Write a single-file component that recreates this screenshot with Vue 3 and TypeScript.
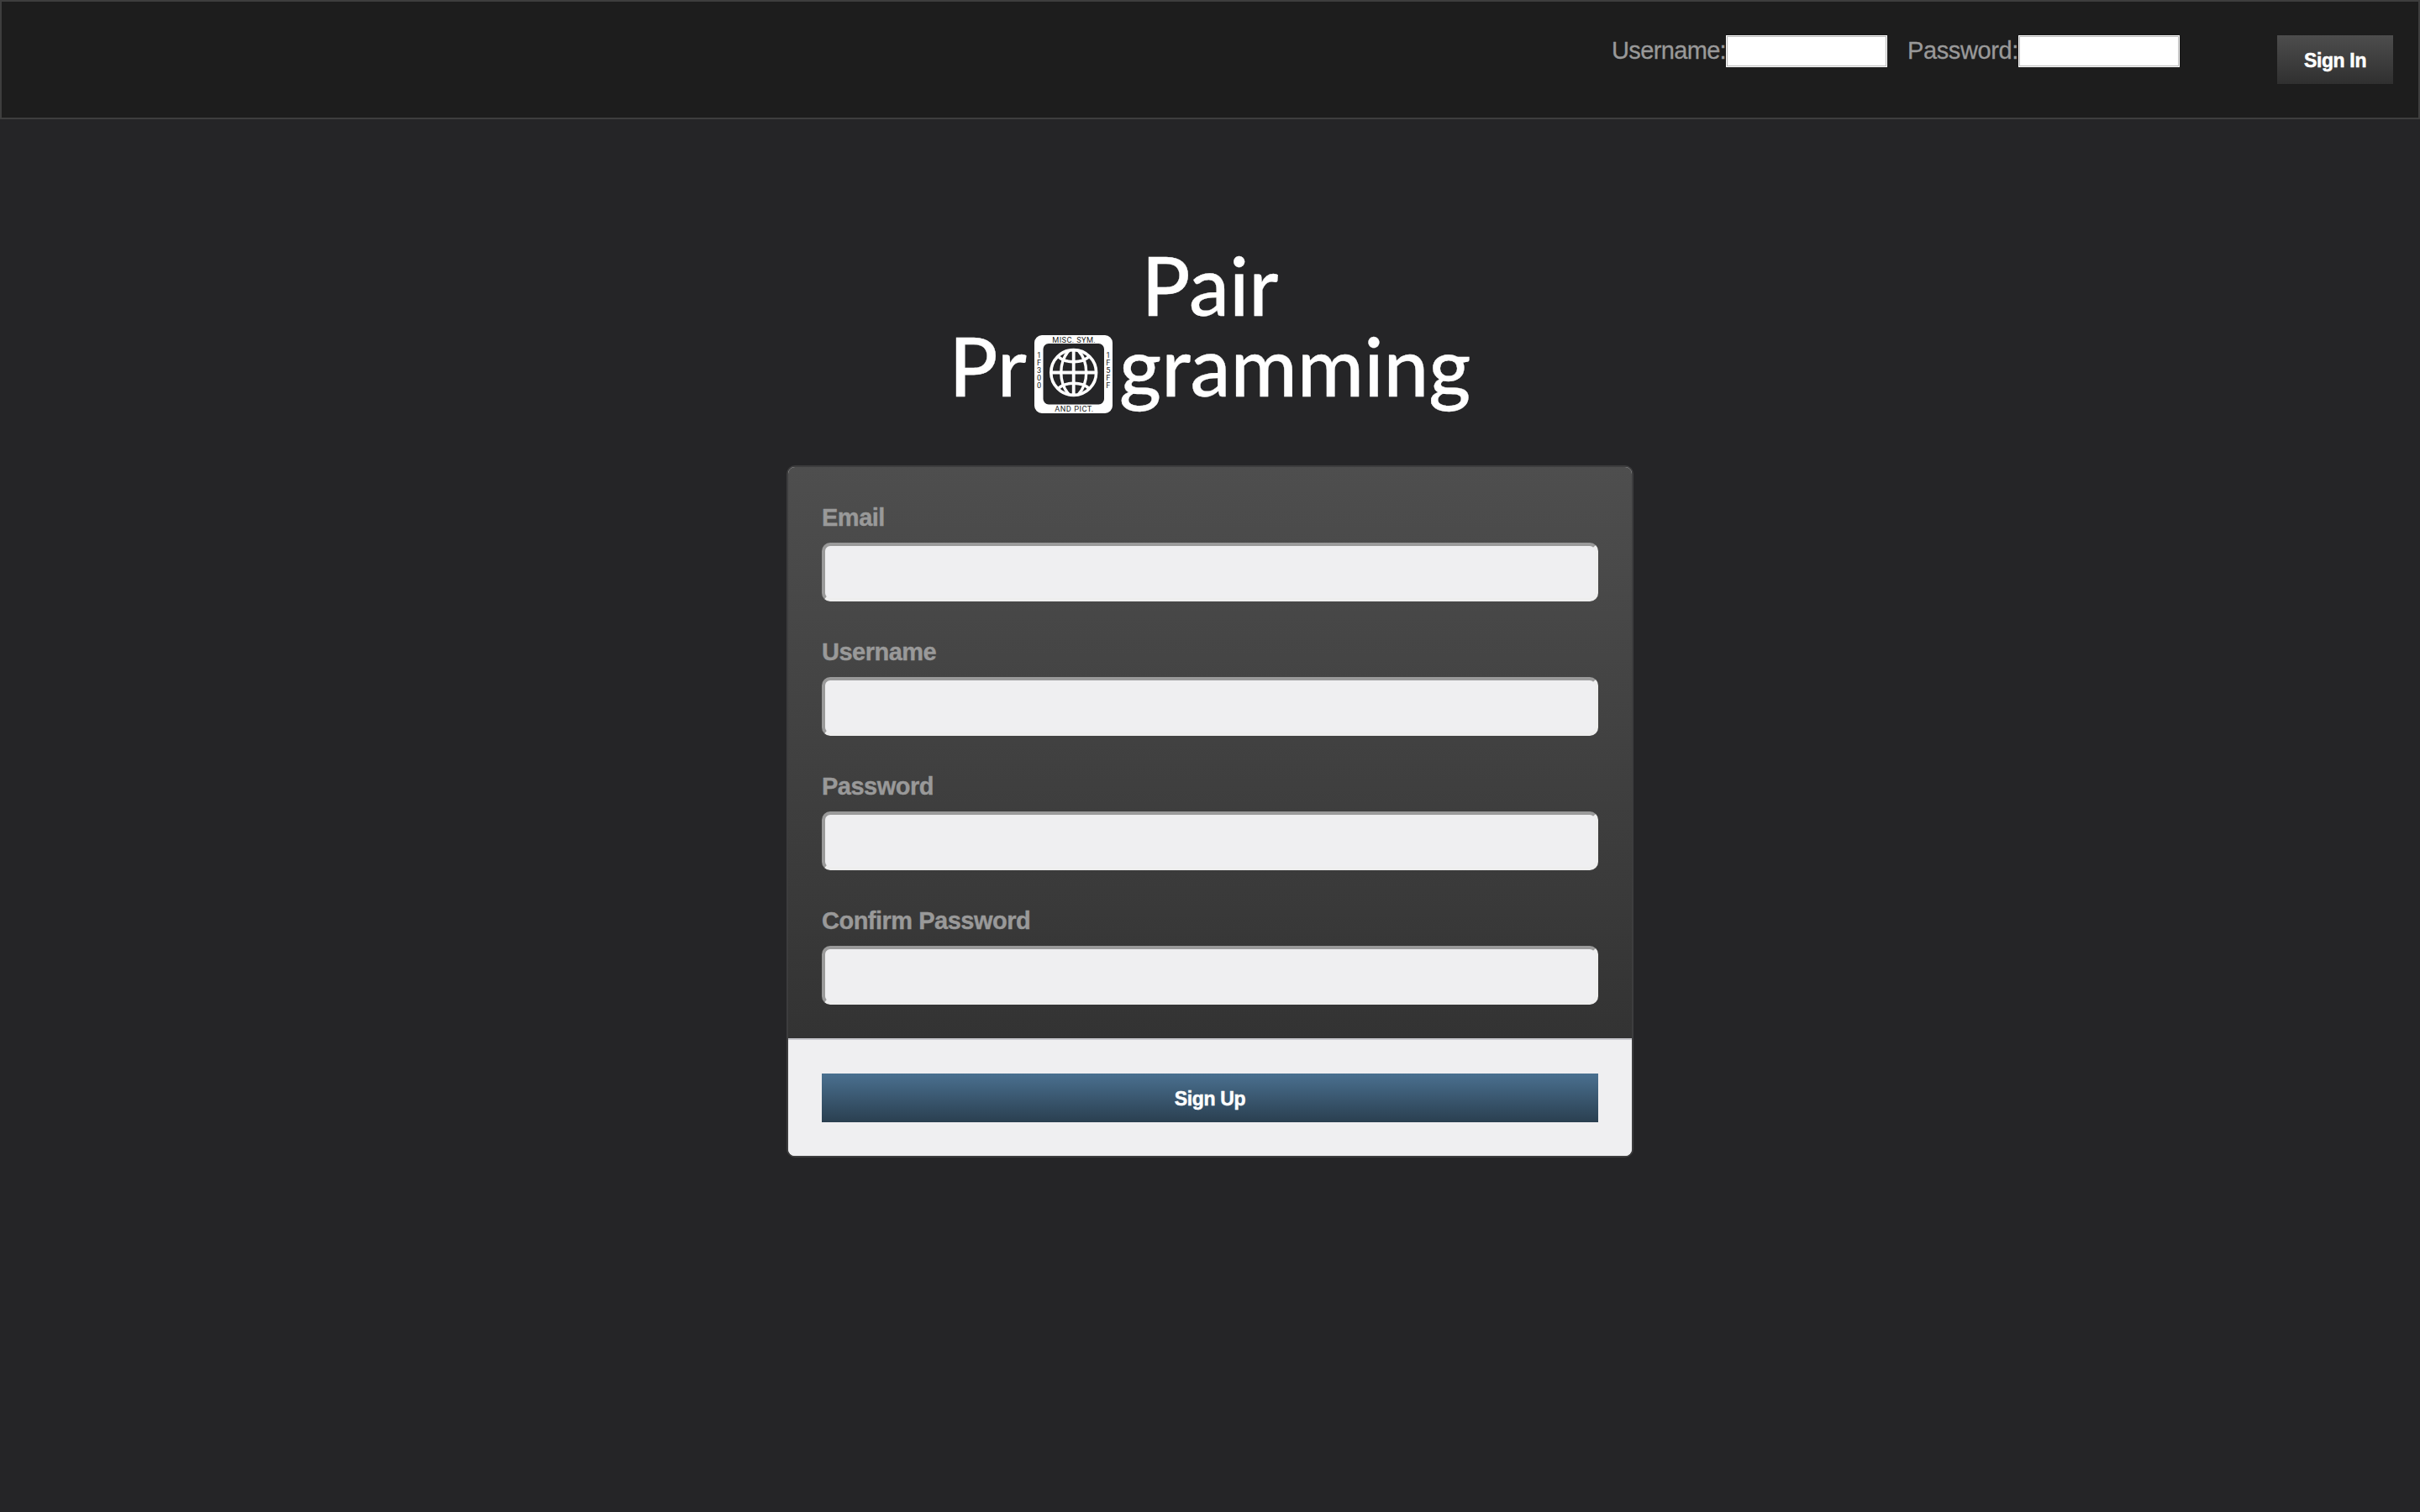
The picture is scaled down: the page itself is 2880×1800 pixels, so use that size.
<script setup lang="ts">
import { ref } from 'vue'

interface Field {
  id: string
  label: string
  type: string
}

const fields: Field[] = [
  { id: 'email', label: 'Email', type: 'text' },
  { id: 'username', label: 'Username', type: 'text' },
  { id: 'password', label: 'Password', type: 'password' },
  { id: 'confirm', label: 'Confirm Password', type: 'password' },
]

const values = ref<Record<string, string>>({})
const login = ref({ username: '', password: '' })

const leftCode = ['1', 'F', '3', '0', '0']
const rightCode = ['1', 'F', '5', 'F', 'F']
</script>

<template>
  <div class="page">
    <form class="nav" @submit.prevent>
      <label class="nav-label user">Username:<input v-model="login.username" class="nav-input" type="text" /></label>
      <label class="nav-label pass">Password:<input v-model="login.password" class="nav-input" type="password" /></label>
      <button class="btn sign-in">Sign In</button>
    </form>

    <h1 class="title">
      <span class="line">Pair</span>
      <span class="line">
        <span>Pr</span>
        <svg class="globe" viewBox="0 0 93 93" width="93" height="93">
          <path
            fill="#fff"
            fill-rule="evenodd"
            d="M9 0H84A9 9 0 0 1 93 9V84A9 9 0 0 1 84 93H9A9 9 0 0 1 0 84V9A9 9 0 0 1 9 0ZM17 10A6.500 6.500 0 0 0 10.500 16.500V76A6.500 6.500 0 0 0 17 82.500H76.500A6.500 6.500 0 0 0 83 76V16.500A6.500 6.500 0 0 0 76.500 10Z"
          />
          <g fill="none" stroke="#fff" stroke-width="3.400">
            <circle cx="46.700" cy="44.500" r="26.900" stroke-width="3.600" />
            <path d="M46.700 17V72M19 44.500H74" stroke-width="3.800" />
            <path d="M41.500 18C28.500 32 28.500 57 41.500 71M52 18C65 32 65 57 52 71" />
            <path d="M28 25C36.500 34 57 34 65.500 25M28 64C36.500 55 57 55 65.500 64" />
          </g>
          <g class="globe-text">
            <text x="21.300" y="8.700" textLength="51.500">MISC. SYM.</text>
            <text x="24.300" y="91" textLength="46">AND PICT.</text>
            <text v-for="(c, i) in leftCode" :key="'l' + i" x="5.500" :y="27 + i * 9.100" text-anchor="middle">{{ c }}</text>
            <text v-for="(c, i) in rightCode" :key="'r' + i" x="87.800" :y="27 + i * 9.100" text-anchor="middle">{{ c }}</text>
          </g>
        </svg>
        <span>gramming</span>
      </span>
    </h1>

    <form class="card" @submit.prevent>
      <div class="card-body">
        <div v-for="f in fields" :key="f.id" class="field">
          <label :for="f.id">{{ f.label }}</label>
          <input :id="f.id" v-model="values[f.id]" :type="f.type" />
        </div>
      </div>
      <div class="card-foot">
        <button class="btn sign-up">Sign Up</button>
      </div>
    </form>
  </div>
</template>

<style>
body {
  margin: 0;
  background: #252527;
}
</style>

<style scoped>
* {
  box-sizing: border-box;
}
.page {
  min-height: 1800px;
  background: #252527;
  font-family: 'Liberation Sans', Arial, sans-serif;
  color: #999;
}
.nav {
  display: flex;
  justify-content: flex-end;
  align-items: flex-start;
  height: 142px;
  padding: 40px 30px 0;
  border: 2px solid #3e3e3e;
  background: #1d1d1d;
}
.nav-label {
  display: flex;
  justify-content: flex-end;
  font-size: 29px;
  line-height: 37px;
  -webkit-text-stroke: 0.3px;
}
.user {
  margin-right: 24px;
  letter-spacing: -0.65px;
}
.pass {
  margin-right: 116px;
  letter-spacing: -0.38px;
}
.nav-input {
  width: 192px;
  height: 38px;
  padding: 0;
  border: 1px solid #fff;
  border-radius: 0;
  background: #fff;
  box-shadow: inset 0 0 0 1px #b9b9b9;
  outline: none;
}
.btn {
  height: 58px;
  padding: 2px 0 0;
  border: 0;
  border-radius: 0;
  color: #fff;
  font: bold 23px/56px 'Liberation Sans', Arial, sans-serif;
  letter-spacing: -0.35px;
  -webkit-text-stroke: 0.5px;
}
.sign-in {
  width: 138px;
  background: linear-gradient(#4d4d4d, #303030);
}
.title {
  display: flex;
  flex-direction: column;
  align-items: center;
  margin: 149px 0 0;
  color: #fff;
  font: 500 96px/96px Lato, sans-serif;
  -webkit-text-stroke: 0.3px #fff;
}
.line {
  display: flex;
  height: 96px;
}
.globe {
  display: block;
  margin: 12px 8px 0 9px;
}
.globe-text {
  fill: #222;
  font: 400 9.200px/1 Roboto, sans-serif;
  -webkit-text-stroke: 0;
}
.card {
  width: 1008px;
  height: 824px;
  margin: 71px auto 0;
  border: 2px solid #3d3d3e;
  border-radius: 10px;
  overflow: hidden;
  background: #efeff1;
}
.card-body {
  height: 680px;
  padding: 40px 40px 0;
  background: linear-gradient(#4e4e4e, #333);
}
.field {
  display: flex;
  flex-direction: column;
  height: 160px;
}
.field label {
  height: 50px;
  font-size: 29px;
  font-weight: bold;
  line-height: 41px;
  letter-spacing: -0.5px;
  -webkit-text-stroke: 0.4px;
}
.field input {
  height: 70px;
  padding: 0 16px;
  border: 4px solid;
  border-color: #9a9a9a #eeeeee #eeeeee #9a9a9a;
  border-radius: 10px;
  background: #efeff1;
  outline: none;
}
.card-foot {
  height: 140px;
  padding: 40px;
  border-top: 2px solid #c7c7cc;
  background: #efeff1;
}
.sign-up {
  display: block;
  width: 924px;
  background: linear-gradient(#4a7090, #2a3f50);
}
</style>
